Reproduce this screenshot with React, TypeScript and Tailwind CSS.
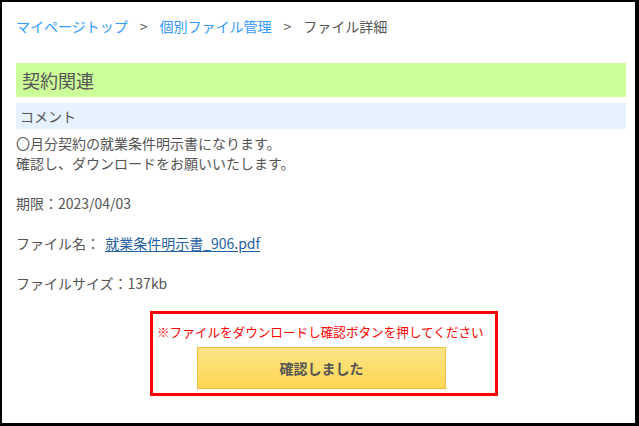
const font = { fontFamily: '"Noto Sans CJK JP", "Noto Sans", sans-serif' }

const App = () => {
    return (
        <div
            style={font}
            className="w-[639px] h-[426px] bg-white border-black border-l-2 border-t-2 border-r-4 border-b-[3px] text-[#555] text-[14px] leading-[20px] overflow-hidden">
            <div className="pl-[14px] pr-[9px]">
                {/* breadcrumb */}
                <nav className="pt-[14px] flex items-center">
                    <a className="text-[#3399ff]">マイページトップ</a>
                    <span className="mx-[12px] text-[#555]">&gt;</span>
                    <a className="text-[#3399ff]">個別ファイル管理</a>
                    <span className="mx-[12px] text-[#555]">&gt;</span>
                    <span>ファイル詳細</span>
                </nav>

                <h2 className="mt-[27px] h-[34px] bg-[#ccff99] px-[6px] flex items-center text-[18px] text-[#555]">
                    契約関連
                </h2>

                <div className="mt-[6px] h-[26px] bg-[#e6f2ff] px-[4px] flex items-center">
                    コメント
                </div>

                <div className="mt-[4px] flex flex-col gap-[20px]">
                    <p>
                        〇月分契約の就業条件明示書になります。
                        <br />
                        確認し、ダウンロードをお願いいたします。
                    </p>
                    <p>期限：2023/04/03</p>
                    <p>
                        ファイル名：{" "}
                        <a className="ml-[2px] text-[#1f5fa0] underline underline-offset-2">就業条件明示書_906.pdf</a>
                    </p>
                    <p>ファイルサイズ：137kb</p>
                </div>

                <div className="mt-[18px] ml-[134px] w-[348px] h-[85px] border-[3px] border-[#ff0000] flex flex-col pt-[8px]">
                    <p className="pl-[4px] text-[#ff0000] text-[12.6px] leading-[20px] whitespace-nowrap">
                        ※ファイルをダウンロードし確認ボタンを押してください
                    </p>
                    <button className="mt-[5px] ml-[44px] w-[249px] h-[42px] border border-[#f2c040] bg-gradient-to-b from-[#fbe486] to-[#ffd650] text-[14px] font-bold text-[#555]">
                        確認しました
                    </button>
                </div>
            </div>
        </div>
    )
}

export default App
